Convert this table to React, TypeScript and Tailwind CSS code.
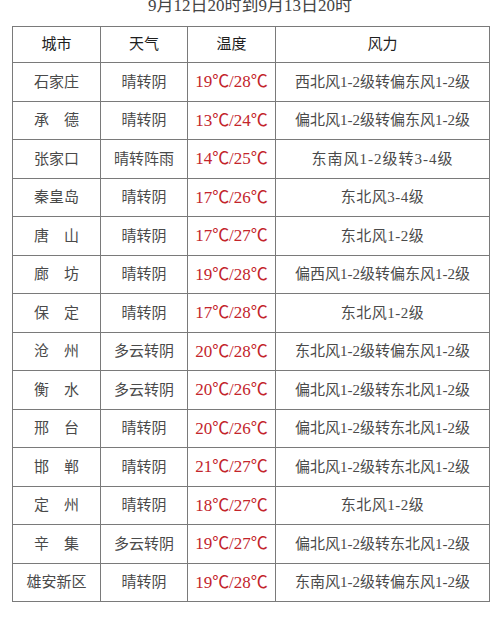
import React from "react";

type Row = { city: string; weather: string; lo: number; hi: number; wind: string };

const rows: Row[] = [
  { city: "石家庄", weather: "晴转阴", lo: 19, hi: 28, wind: "西北风1-2级转偏东风1-2级" },
  { city: "承　德", weather: "晴转阴", lo: 13, hi: 24, wind: "偏北风1-2级转偏东风1-2级" },
  { city: "张家口", weather: "晴转阵雨", lo: 14, hi: 25, wind: "东南风1-2级转3-4级" },
  { city: "秦皇岛", weather: "晴转阴", lo: 17, hi: 26, wind: "东北风3-4级" },
  { city: "唐　山", weather: "晴转阴", lo: 17, hi: 27, wind: "东北风1-2级" },
  { city: "廊　坊", weather: "晴转阴", lo: 19, hi: 28, wind: "偏西风1-2级转偏东风1-2级" },
  { city: "保　定", weather: "晴转阴", lo: 17, hi: 28, wind: "东北风1-2级" },
  { city: "沧　州", weather: "多云转阴", lo: 20, hi: 28, wind: "东北风1-2级转偏东风1-2级" },
  { city: "衡　水", weather: "多云转阴", lo: 20, hi: 26, wind: "偏北风1-2级转东北风1-2级" },
  { city: "邢　台", weather: "晴转阴", lo: 20, hi: 26, wind: "偏北风1-2级转东北风1-2级" },
  { city: "邯　郸", weather: "晴转阴", lo: 21, hi: 27, wind: "偏北风1-2级转东北风1-2级" },
  { city: "定　州", weather: "晴转阴", lo: 18, hi: 27, wind: "东北风1-2级" },
  { city: "辛　集", weather: "多云转阴", lo: 19, hi: 27, wind: "偏北风1-2级转东北风1-2级" },
  { city: "雄安新区", weather: "晴转阴", lo: 19, hi: 28, wind: "东南风1-2级转偏东风1-2级" },
];

const cell = "flex items-center justify-center border-r border-b border-[#7a7a7a]";

export default function App() {
  return (
    <div className="w-[500px] h-[625px] bg-white overflow-hidden font-['Liberation_Serif','Noto_Sans_CJK_SC',serif] text-[#4a4a4a]">
      <div className="h-[29px] -mt-[3px] text-center text-[17px] leading-[18px] text-[#444]">
        9月12日20时到9月13日20时
      </div>
      <div className="ml-[12px] w-[478px] border-l border-t border-[#7a7a7a] grid grid-cols-[88px_87px_88px_214px]">
        {["城市", "天气", "温度", "风力"].map((h) => (
          <div key={h} className={`${cell} h-[36px] text-[15px] text-[#1e1e1e]`}>
            {h}
          </div>
        ))}
        {rows.map((r, i) => {
          const h = i % 2 === 0 ? "h-[39px]" : "h-[38px]";
          const len = r.wind.length;
          const track = len > 12 ? "" : len > 7 ? "tracking-[1px]" : "tracking-[0.5px]";
          return (
            <React.Fragment key={i}>
              <div className={`${cell} ${h} text-[15px]`}>{r.city}</div>
              <div className={`${cell} ${h} text-[15px]`}>{r.weather}</div>
              <div className={`${cell} ${h} text-[17px] text-[#c3242b]`}>
                {r.lo}℃/{r.hi}℃
              </div>
              <div className={`${cell} ${h} text-[15px] ${track}`}>{r.wind}</div>
            </React.Fragment>
          );
        })}
      </div>
    </div>
  );
}
